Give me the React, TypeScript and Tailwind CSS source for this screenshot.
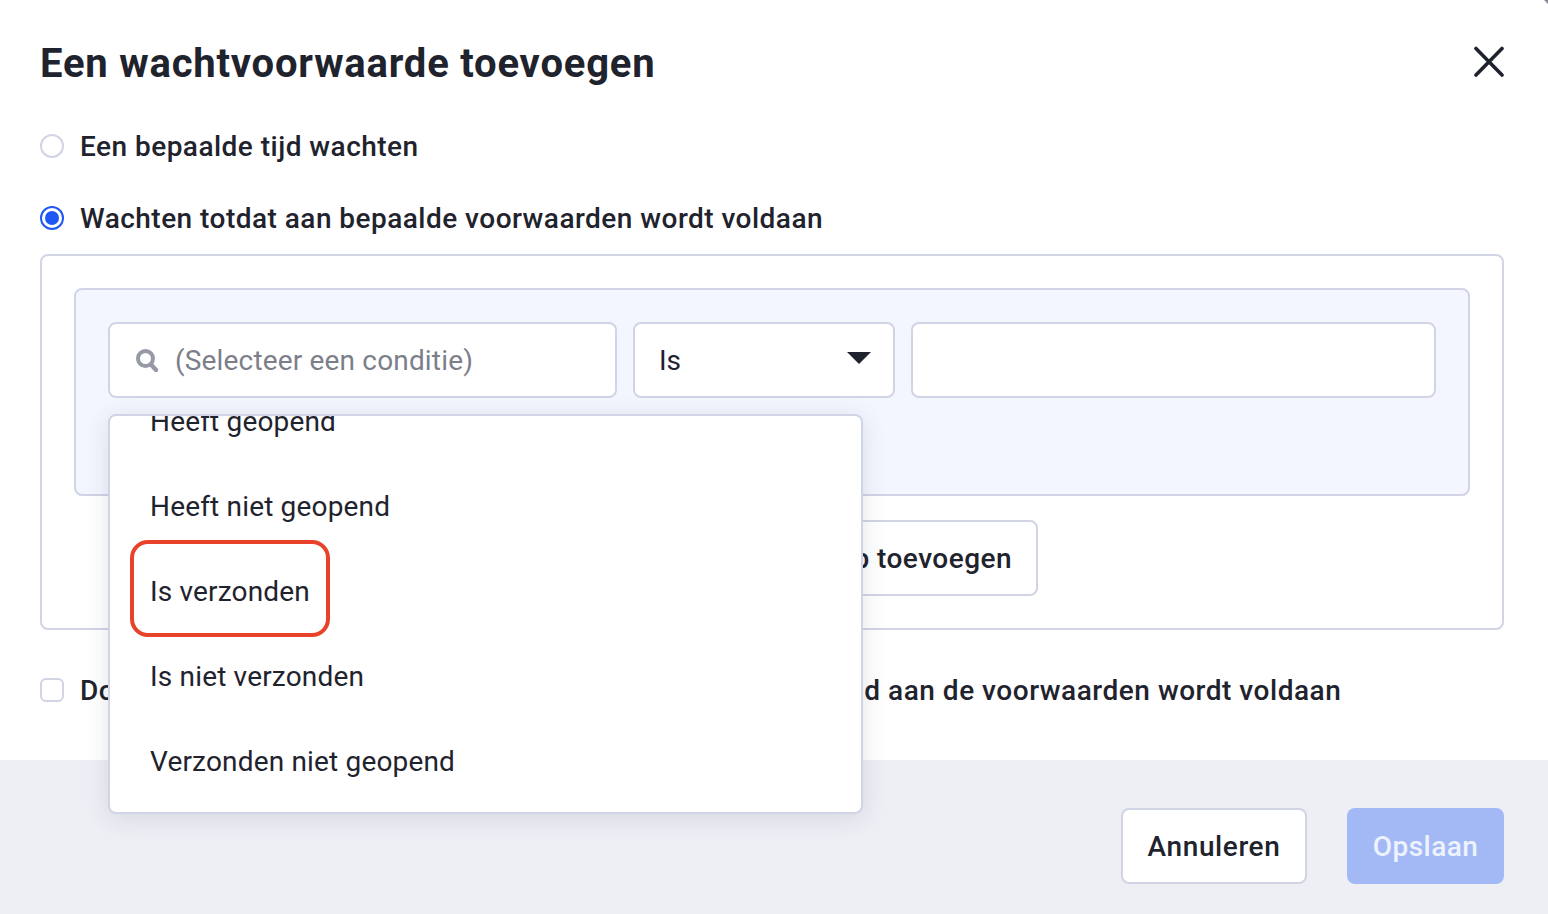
import React from 'react';

const options = ['Heeft geopend', 'Heeft niet geopend', 'Is verzonden', 'Is niet verzonden', 'Verzonden niet geopend'];

const App: React.FC = () => {
  return (
    <div className="relative flex h-[914px] w-[1548px] flex-col overflow-hidden bg-white font-['Roboto',sans-serif] text-[#1f232d]">
      <main className="h-[760px] pl-10 pr-11">
        {/* Header */}
        <div className="flex h-[126px] items-start justify-between pt-[39px]">
          <h1 className="text-[40px] font-bold leading-[50px] tracking-[0.8px]">Een wachtvoorwaarde toevoegen</h1>
          <button className="mt-[7px] -mr-px">
            <svg width="32" height="32" viewBox="0 0 32 32" fill="none" stroke="#1f232d" strokeWidth="3.6" strokeLinecap="round">
              <path d="M3 2.5 L29 29 M29 2.5 L3 29" />
            </svg>
          </button>
        </div>

        {/* Wait type */}
        <label className="flex h-10 items-center gap-4 text-[28px] font-medium tracking-[0.47px]">
          <span className="h-6 w-6 rounded-full border-2 border-[#d0d4e4] bg-white" />
          <span className="pt-0.5">Een bepaalde tijd wachten</span>
        </label>
        <label className="mt-8 flex h-10 items-center gap-4 text-[28px] font-medium tracking-[0.47px]">
          <span className="flex h-6 w-6 items-center justify-center rounded-full border-2 border-[#1f57f5] bg-white">
            <span className="h-3.5 w-3.5 rounded-full bg-[#1f57f5]" />
          </span>
          <span className="pt-0.5">Wachten totdat aan bepaalde voorwaarden wordt voldaan</span>
        </label>

        {/* Conditions */}
        <div className="mt-4 h-[376px] rounded-lg border-2 border-[#d0d4e4] p-8">
          <div className="h-[208px] rounded-lg border-2 border-[#d0d4e4] bg-[#f3f6fe] p-8">
            <div className="flex gap-4">
              <div className="flex h-[76px] w-[509px] items-center gap-[17px] rounded-lg border-2 border-[#d0d4e4] bg-white pl-[26px] text-[28px] tracking-[0.17px] text-[#7c7f8a]">
                <svg width="22" height="23" viewBox="0 0 22 23" fill="none" stroke="#9699a6" strokeWidth="4">
                  <circle cx="9.5" cy="9.5" r="7.5" />
                  <path d="M15 15.5 L20 21" strokeLinecap="round" strokeWidth="4.4" />
                </svg>
                <span className="pt-0.5">(Selecteer een conditie)</span>
              </div>
              <div className="flex h-[76px] w-[262px] items-center justify-between rounded-lg border-2 border-[#d0d4e4] bg-white pl-6 pr-[22px] pt-0.5 text-[28px]">
                Is
                <svg width="24" height="12" viewBox="0 0 24 12" className="-mt-1.5" fill="#1f232d">
                  <path d="M0 0 H24 L12 12 Z" />
                </svg>
              </div>
              <div className="h-[76px] flex-1 rounded-lg border-2 border-[#d0d4e4] bg-white" />
            </div>
          </div>
          <div className="mt-6 flex justify-start pl-[514px]">
            <button className="h-[76px] w-[450px] rounded-lg border-2 border-[#d0d4e4] pr-6 pt-0.5 text-right text-[28px] font-medium tracking-[0.47px]">
              Groep toevoegen
            </button>
          </div>
        </div>

        {/* Timeout option */}
        <label className="mt-10 flex h-10 items-center gap-4 text-[28px] font-medium tracking-[0.52px]">
          <span className="h-6 w-6 rounded-md border-2 border-[#d0d4e4] bg-white" />
          <span className="pt-0.5">Doorgaan naar de volgende stap zodra er op enig moment tijd aan de voorwaarden wordt voldaan</span>
        </label>
      </main>

      {/* Footer */}
      <footer className="flex flex-1 items-start justify-end gap-10 bg-[#eeeff5] pr-11 pt-12">
        <button className="h-[76px] w-[186px] rounded-lg border-2 border-[#d0d4e4] bg-white pt-0.5 text-[28px] font-medium tracking-[0.6px]">Annuleren</button>
        <button className="h-[76px] w-[157px] rounded-lg bg-[#a3b9f6] pt-0.5 text-[28px] font-medium tracking-[0.47px] text-[#eef2fd]">Opslaan</button>
      </footer>

      {/* Dropdown menu */}
      <div className="absolute left-[108px] top-[414px] h-[400px] w-[755px] overflow-hidden rounded-lg border-2 border-[#d0d4e4] bg-white shadow-[0_4px_24px_rgba(29,38,74,0.12)]">
        <ul className="-mt-[37px] pl-10 text-[28px] tracking-[0.17px]">
          {options.map((option) => (
            <li key={option} className="flex h-[85px] items-center">{option}</li>
          ))}
        </ul>
      </div>

      {/* Callout */}
      <div className="absolute left-[130px] top-[540px] h-[97px] w-[200px] rounded-[18px] border-4 border-[#e8432a]" />

      {/* Window corner */}
      <svg className="absolute right-0 top-0" width="4" height="4" viewBox="0 0 4 4" fill="#8a8c94">
        <path d="M0 0 H4 V4 Z" />
      </svg>
    </div>
  );
};

export default App;
